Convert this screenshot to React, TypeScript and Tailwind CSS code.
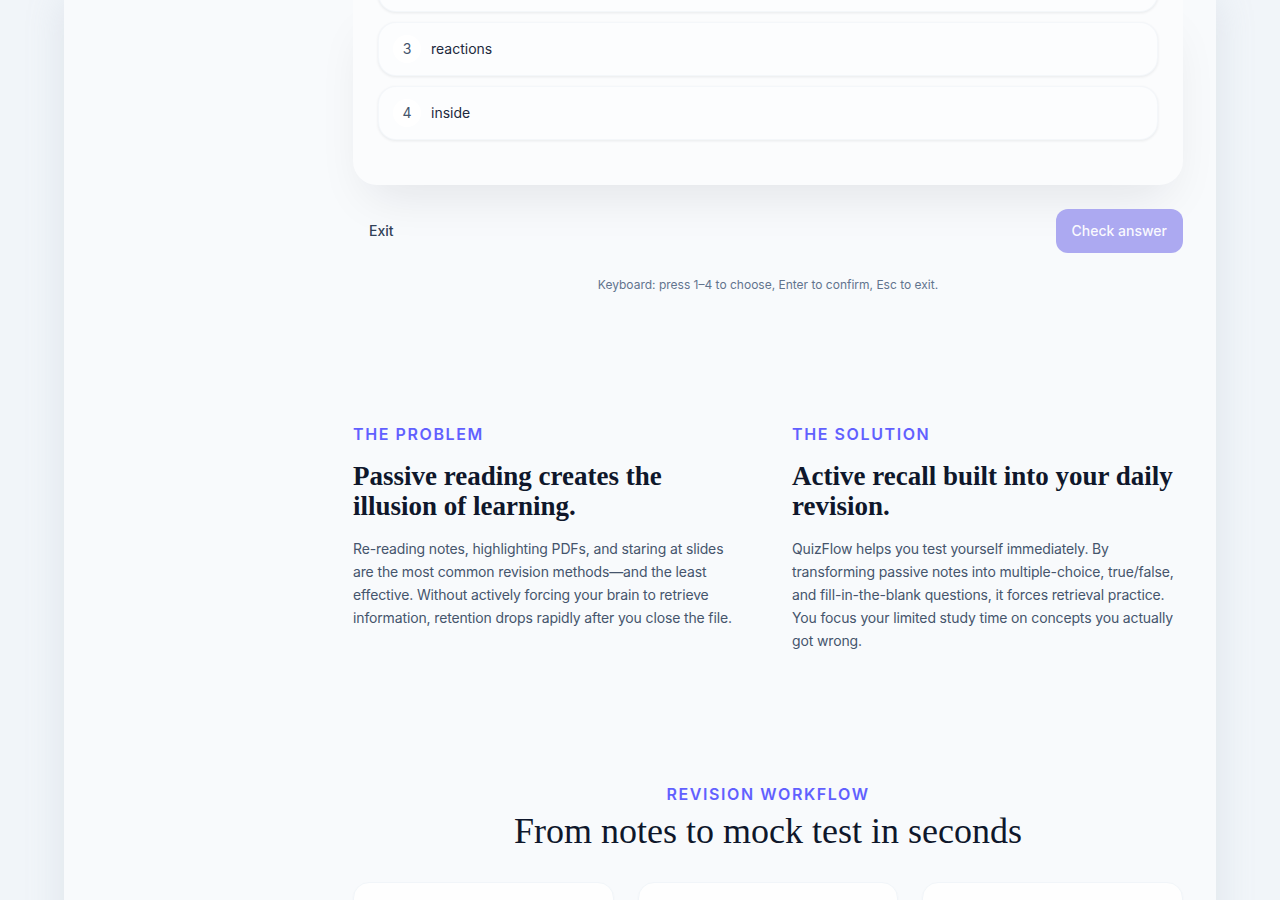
import React from "react";

const options = [
  { n: 3, label: "reactions" },
  { n: 4, label: "inside" },
];

const sans = "font-['Inter','Liberation_Sans',sans-serif]";
const serif = "font-['Liberation_Serif','DejaVu_Serif',serif]";

function OptionRow({ n, label, className = "" }: { n?: number; label: string; className?: string }) {
  return (
    <div
      className={`flex h-[54px] items-center gap-2.5 rounded-[18px] border border-slate-100/80 bg-[#fcfdfe] pl-[14px] shadow-[0_1px_3px_rgba(15,23,42,0.08)] ${className}`}
    >
      <span className="flex h-7 w-7 items-center justify-center rounded-full bg-white text-sm text-slate-600">
        {n}
      </span>
      <span className="text-sm text-slate-800">{label}</span>
    </div>
  );
}

export default function App() {
  return (
    <div className={`min-h-screen bg-[#f1f5f9] ${sans}`}>
      <div className="mx-auto flex min-h-screen w-[1152px] bg-slate-50 shadow-[0_0_36px_rgba(148,163,184,0.22)]">
        {/* left rail, empty at this scroll position */}
        <aside className="w-[257px] shrink-0" />

        <main className="flex-1 pb-24 pl-8 pr-[33px]">
          {/* quiz card */}
          <div className="rounded-b-3xl bg-[#fbfcfd] px-[25px] pb-[45px] shadow-[0_24px_50px_-16px_rgba(15,23,42,0.10)]">
            <div className="flex flex-col gap-2.5">
              <OptionRow label="" className="-mt-[42px]" />
              {options.map((o) => (
                <OptionRow key={o.n} n={o.n} label={o.label} />
              ))}
            </div>
          </div>

          <div className="mt-6 flex items-center justify-between">
            <button className="h-11 rounded-xl px-4 text-sm font-medium text-slate-700">Exit</button>
            <button className="h-11 rounded-xl bg-[#aca9f1] px-4 text-sm font-medium text-white/95">
              Check answer
            </button>
          </div>

          <p className="mt-6 text-center text-xs leading-4 text-slate-500">
            Keyboard: press 1–4 to choose, Enter to confirm, Esc to exit.
          </p>

          {/* problem / solution */}
          <section className="mt-[129px] grid grid-cols-2 gap-12">
            <div>
              <p className="text-base font-semibold leading-6 tracking-[0.1em] text-indigo-500">THE PROBLEM</p>
              <h2 className={`mt-[15px] text-[27px] font-bold leading-[30px] text-slate-900 ${serif}`}>
                Passive reading creates the illusion of learning.
              </h2>
              <p className="mt-4 text-sm leading-[23px] tracking-[-0.01em] text-slate-600">
                Re-reading notes, highlighting PDFs, and staring at slides are the most common revision methods—and
                the least effective. Without actively forcing your brain to retrieve information, retention drops
                rapidly after you close the file.
              </p>
            </div>
            <div>
              <p className="text-base font-semibold leading-6 tracking-[0.1em] text-indigo-500">THE SOLUTION</p>
              <h2 className={`mt-[15px] text-[27px] font-bold leading-[30px] text-slate-900 ${serif}`}>
                Active recall built into your daily revision.
              </h2>
              <p className="mt-4 text-sm leading-[23px] tracking-[-0.01em] text-slate-600">
                QuizFlow helps you test yourself immediately. By transforming passive notes into multiple-choice,
                true/false, and fill-in-the-blank questions, it forces retrieval practice. You focus your limited
                study time on concepts you actually got wrong.
              </p>
            </div>
          </section>

          {/* workflow */}
          <section className="mt-[130px] text-center">
            <p className="text-base font-semibold leading-6 tracking-[0.1em] text-indigo-500">REVISION WORKFLOW</p>
            <h2 className={`mt-1 text-[36px] leading-[42px] text-slate-900 ${serif}`}>
              From notes to mock test in seconds
            </h2>
            <div className="mt-[30px] grid grid-cols-3 gap-6">
              {[0, 1, 2].map((i) => (
                <div
                  key={i}
                  className="h-52 rounded-2xl border border-slate-100 bg-white/80 shadow-[0_1px_2px_rgba(15,23,42,0.04)]"
                />
              ))}
            </div>
          </section>
        </main>
      </div>
    </div>
  );
}
